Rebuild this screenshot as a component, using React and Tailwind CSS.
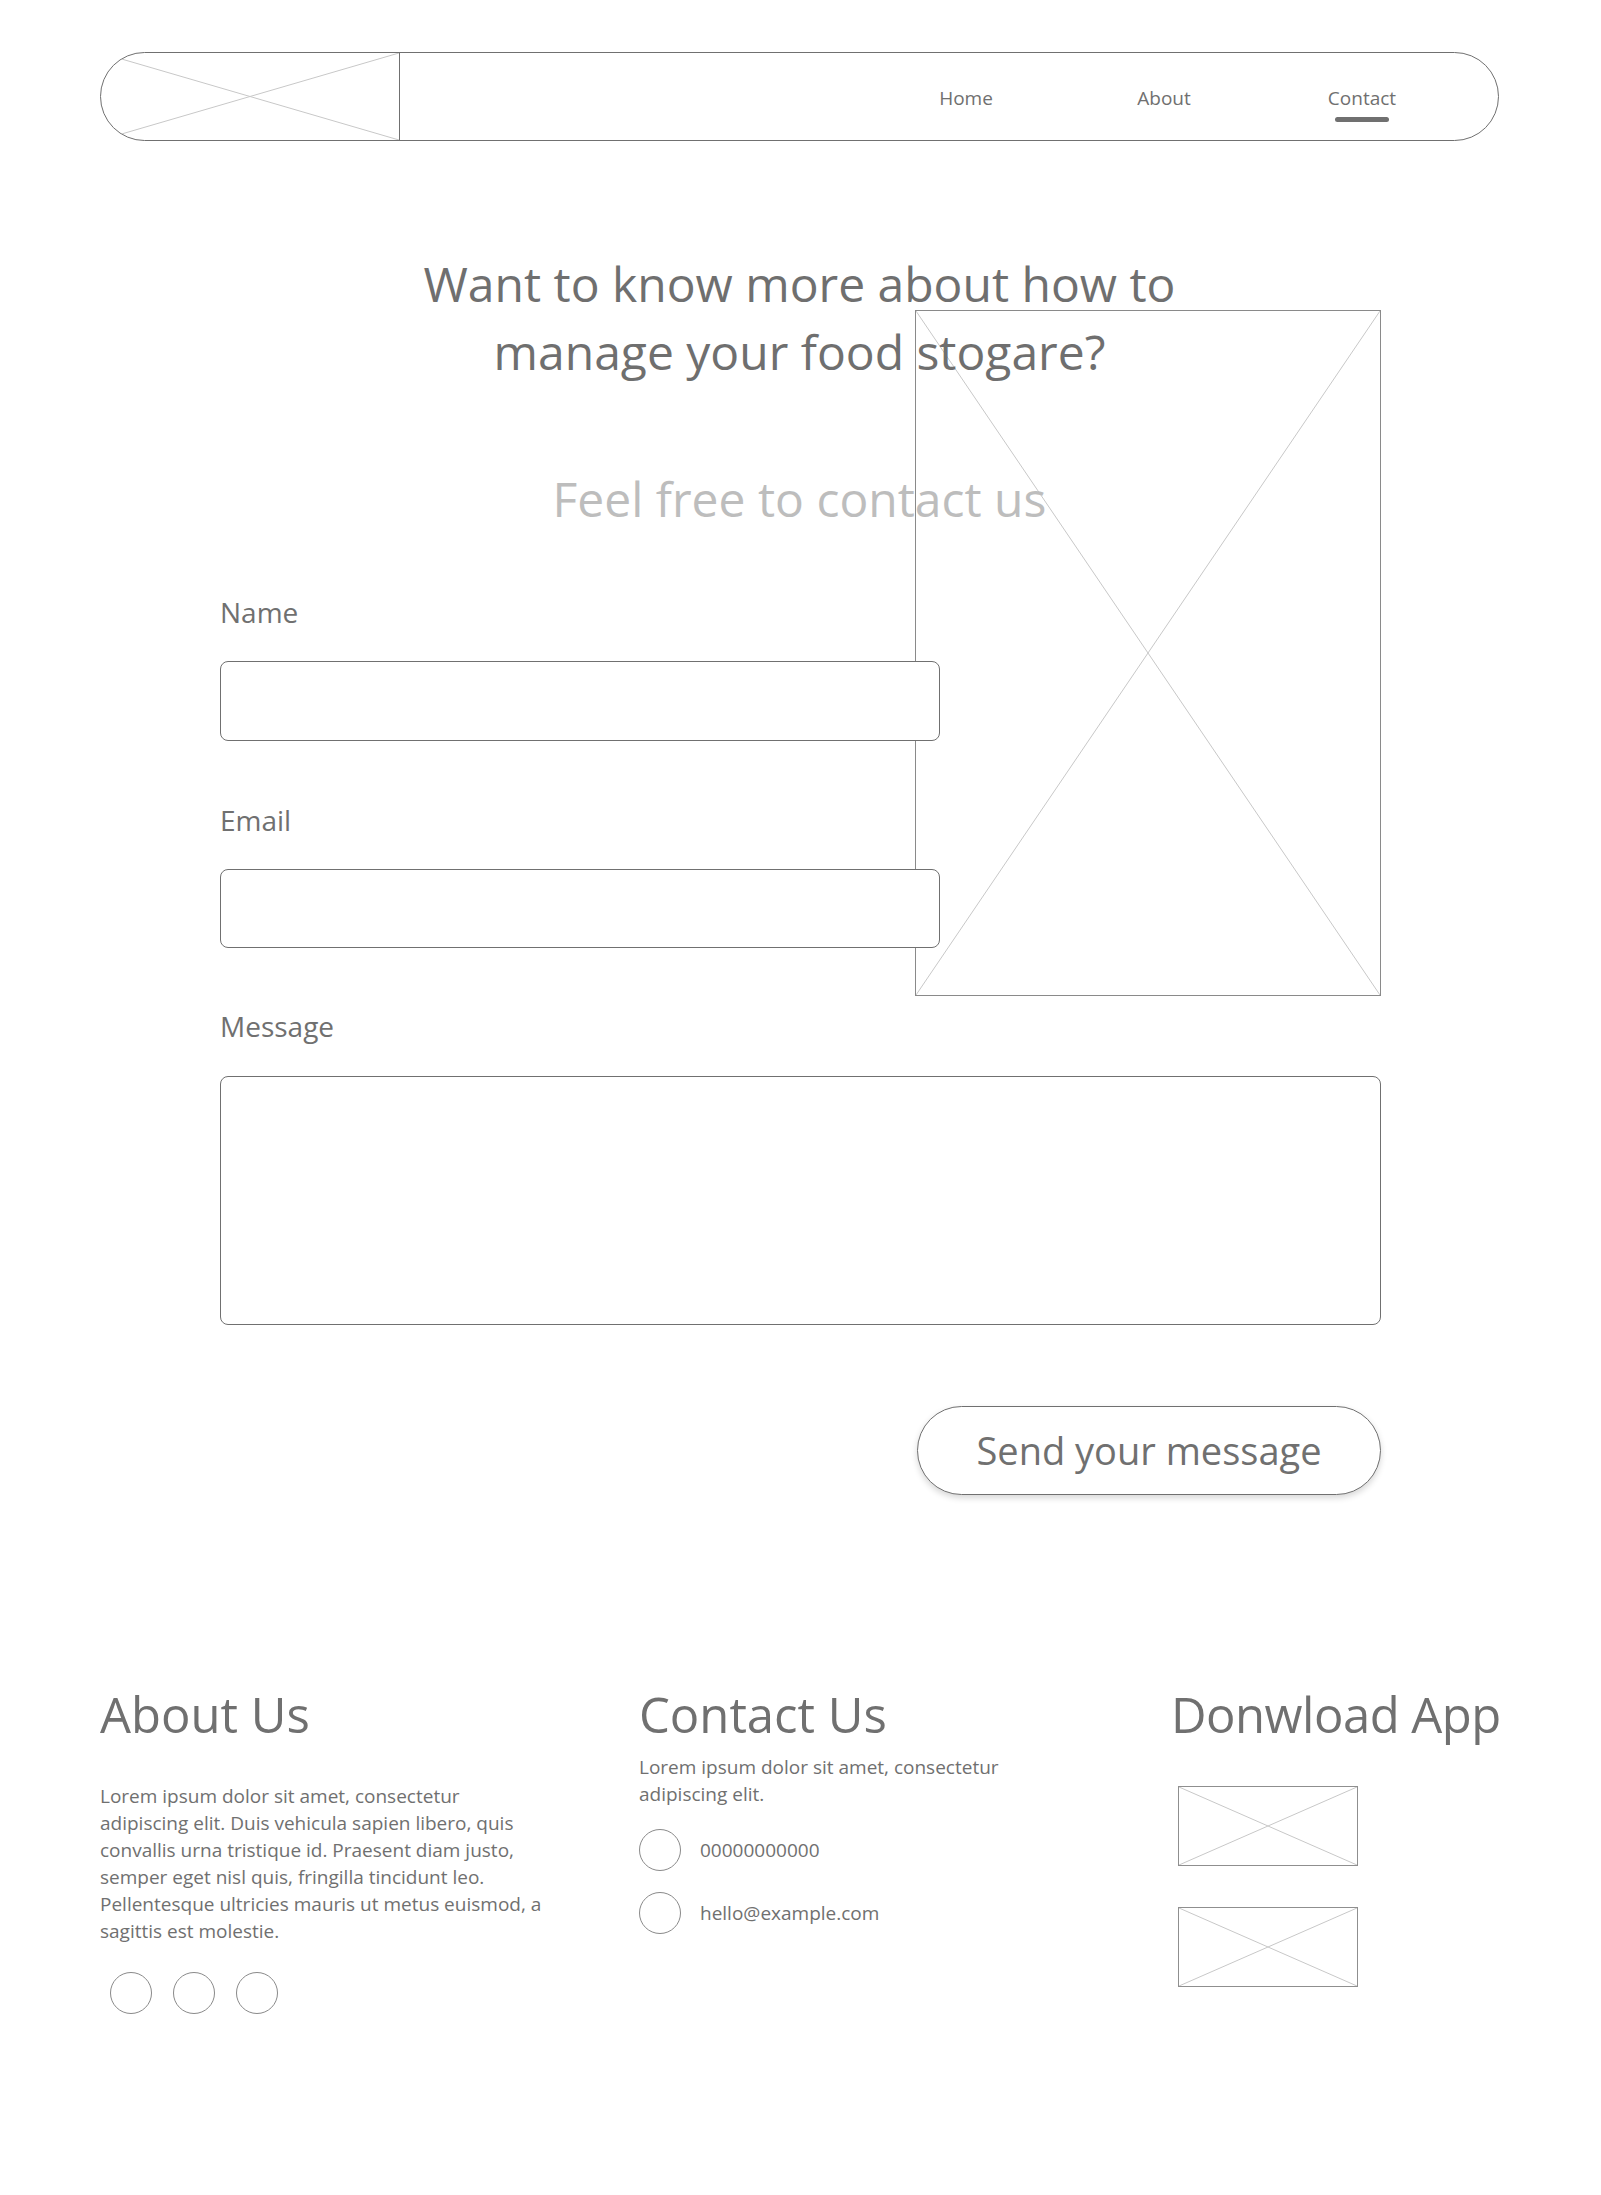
import React from "react";

function XLines({ color = "#c8c8c8" }) {
  return (
    <svg
      className="absolute inset-0 h-full w-full"
      viewBox="0 0 100 100"
      preserveAspectRatio="none"
    >
      <line x1="0" y1="0" x2="100" y2="100" stroke={color} strokeWidth="1" vectorEffect="non-scaling-stroke" />
      <line x1="0" y1="100" x2="100" y2="0" stroke={color} strokeWidth="1" vectorEffect="non-scaling-stroke" />
    </svg>
  );
}

function Circle() {
  return <div className="h-[42px] w-[42px] shrink-0 rounded-full border border-[#8a8a8a]" />;
}

export default function App() {
  return (
    <div className="relative min-h-[2195px] w-full bg-white pl-[100px] pr-[102px] text-[#707070] font-['Open_Sans',sans-serif]">
      {/* Navbar */}
      <nav className="mt-[52px] flex h-[89px] items-center overflow-hidden rounded-full border border-[#707070]">
        <div className="relative h-full w-[299px] shrink-0 border-r border-[#707070]">
          <XLines />
        </div>
        <div className="ml-auto flex items-center gap-[78px] pr-[76px] pt-[2px] text-[19px] leading-[26px]">
          <a className="block w-[120px] text-center">Home</a>
          <a className="block w-[120px] text-center">About</a>
          <a className="relative block w-[120px] text-center">
            Contact
            <span className="absolute left-1/2 top-[32px] h-[5px] w-[54px] -translate-x-1/2 rounded-full bg-[#707070]" />
          </a>
        </div>
      </nav>

      {/* Main */}
      <main className="relative pt-[109px]">
        <div className="absolute left-[815px] top-[169px] h-[686px] w-[466px] border border-[#8a8a8a]">
          <XLines color="#c8c8c8" />
        </div>

        <h1 className="relative z-10 text-center text-[48px] font-normal leading-[68px] text-[#6f6f6f]">
          Want to know more about how to
          <br />
          manage your food stogare?
        </h1>
        <p className="relative z-10 mt-[79px] text-center text-[48px] leading-[68px] text-[#bdbdbd]">
          Feel free to contact us
        </p>

        <form className="relative z-10 ml-[120px] mt-[60px] w-[1161px]">
          <label className="block text-[28px] leading-[38px]">Name</label>
          <input
            type="text"
            className="mt-[30px] block h-[80px] w-[720px] rounded-lg border border-[#707070] bg-white"
          />
          <label className="mt-[60px] block text-[28px] leading-[38px]">Email</label>
          <input
            type="email"
            className="mt-[30px] block h-[79px] w-[720px] rounded-lg border border-[#707070] bg-white"
          />
          <label className="mt-[59px] block text-[28px] leading-[38px]">Message</label>
          <textarea className="mt-[31px] block h-[249px] w-full resize-none rounded-lg border border-[#707070] bg-white" />
          <div className="mt-[81px] flex justify-end">
            <button
              type="button"
              className="h-[89px] w-[464px] rounded-full border border-[#707070] bg-white text-[38px] text-[#707070] shadow-[0_3px_6px_rgba(0,0,0,0.16)]"
            >
              Send your message
            </button>
          </div>
        </form>
      </main>

      {/* Footer */}
      <footer className="mt-[185px] flex">
        <div className="w-[539px] shrink-0">
          <h2 className="whitespace-nowrap text-[49px] font-normal leading-[68px]">About Us</h2>
          <p className="mt-[35px] text-[19px] leading-[27px]">
            Lorem ipsum dolor sit amet, consectetur
            <br />
            adipiscing elit. Duis vehicula sapien libero, quis
            <br />
            convallis urna tristique id. Praesent diam justo,
            <br />
            semper eget nisl quis, fringilla tincidunt leo.
            <br />
            Pellentesque ultricies mauris ut metus euismod, a
            <br />
            sagittis est molestie.
          </p>
          <div className="ml-[10px] mt-[27px] flex gap-[21px]">
            <Circle />
            <Circle />
            <Circle />
          </div>
        </div>

        <div className="w-[532px] shrink-0">
          <h2 className="whitespace-nowrap text-[49px] font-normal leading-[68px]">Contact Us</h2>
          <p className="mt-[6px] text-[19px] leading-[27px]">
            Lorem ipsum dolor sit amet, consectetur
            <br />
            adipiscing elit.
          </p>
          <div className="mt-[21px] flex flex-col gap-[21px]">
            <div className="flex items-center gap-[19px]">
              <Circle />
              <span className="text-[19px]">00000000000</span>
            </div>
            <div className="flex items-center gap-[19px]">
              <Circle />
              <span className="text-[19px]">hello@example.com</span>
            </div>
          </div>
        </div>

        <div className="min-w-0 flex-1">
          <h2 className="whitespace-nowrap text-[49px] font-normal leading-[68px] tracking-[-0.5px]">Donwload App</h2>
          <div className="ml-[7px] mt-[38px] flex flex-col gap-[41px]">
            <div className="relative h-[80px] w-[180px] border border-[#8f8f8f]">
              <XLines />
            </div>
            <div className="relative h-[80px] w-[180px] border border-[#8f8f8f]">
              <XLines />
            </div>
          </div>
        </div>
      </footer>
    </div>
  );
}
